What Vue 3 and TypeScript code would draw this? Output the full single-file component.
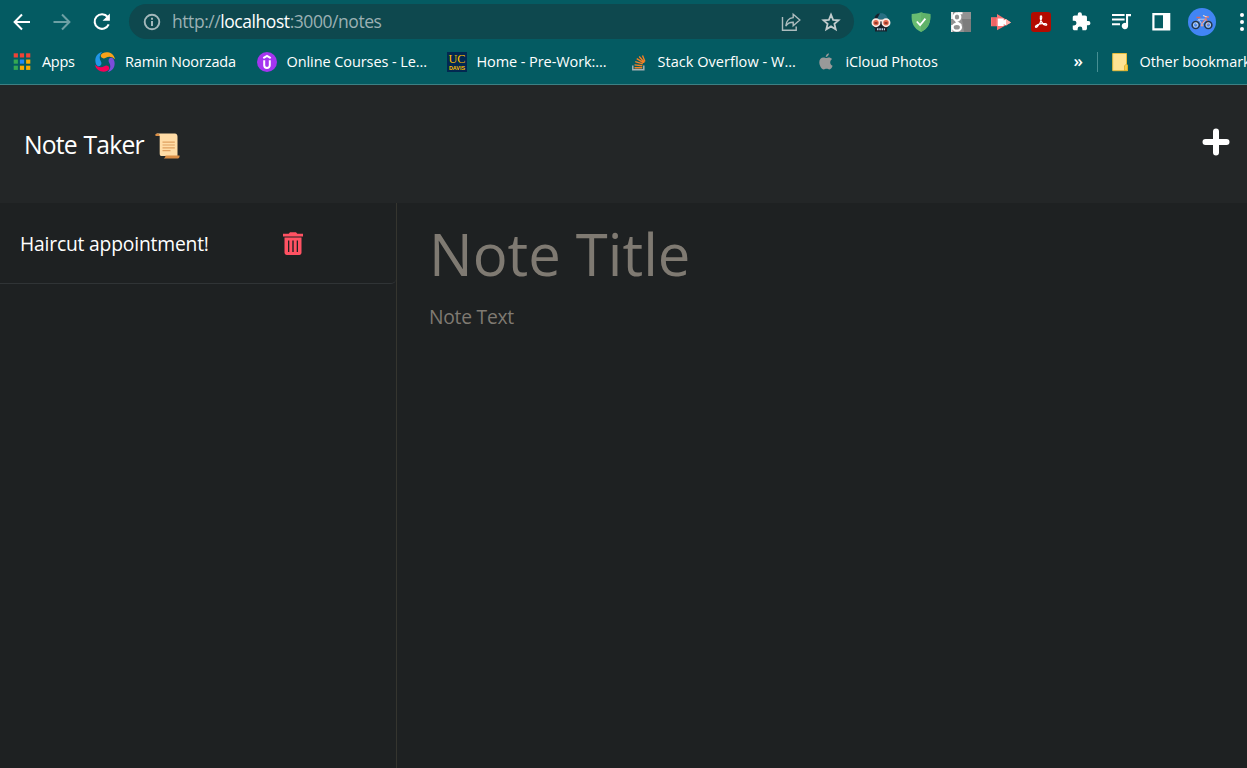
<script setup lang="ts">
interface Bookmark {
  icon: string
  label: string
  width: number
}

const bookmarks: Bookmark[] = [
  { icon: 'apps', label: 'Apps', width: 33 },
  { icon: 'swirl', label: 'Ramin Noorzada', width: 111.5 },
  { icon: 'udemy', label: 'Online Courses - Le...', width: 140 },
  { icon: 'davis', label: 'Home - Pre-Work:...', width: 131 },
  { icon: 'stack', label: 'Stack Overflow - W...', width: 138 },
  { icon: 'apple', label: 'iCloud Photos', width: 94 },
]

const appColors = ['#f04336', '#f04336', '#f04336', '#34a853', '#1e88f5', '#f9ab00', '#34a853', '#f9ab00', '#f9ab00']
const swirlColors = ['#f9a21a', '#7c4ddb', '#f50057', '#2196e8']
const notes: string[] = ['Haircut appointment!']
</script>

<template>
  <div class="window">
    <div class="toolbar">
      <span class="slot"><svg width="20" height="20" viewBox="0 0 20 20" fill="none" stroke="#fff" stroke-width="2"><path d="M18 10H3M10 2.500 2.600 10l7.400 7.500" /></svg></span>
      <span class="slot dim"><svg width="20" height="20" viewBox="0 0 20 20" fill="none" stroke="#fff" stroke-width="2"><path d="M1.500 10H17M10 2.500l7.400 7.500-7.400 7.500" /></svg></span>
      <span class="slot"><svg width="20" height="20" viewBox="0 0 20 20" fill="none" stroke="#fff" stroke-width="2.100"><path d="M15.700 5A7.300 7.300 0 1 0 16.700 12.400" /><path d="M17.900 1.400v7.300h-7.300z" fill="#fff" stroke="none" /></svg></span>
      <div class="address">
        <svg class="info" width="18" height="18" viewBox="0 0 18 18"><circle cx="9" cy="9" r="7.300" fill="none" stroke="#a4b8bb" stroke-width="1.900" /><path d="M8 8h2v5H8zM8 4.800h2v1.900H8z" fill="#a4b8bb" /></svg>
        <span class="url">http://<b>localhost</b>:3000/notes</span>
        <span class="slot push"><svg width="20" height="20" viewBox="0 0 20 20" fill="none" stroke="#aebcbe" stroke-width="1.400"><path d="M1.500 5v13.200h13.700v-3.700" /><path d="M12.200 2.200 18.800 8l-6.600 5.700v-3.400C8.800 10.200 6.600 11.200 4.800 14c.4-4.300 3-7.900 7.400-8.400z" /></svg></span>
        <span class="slot"><svg width="20" height="20" viewBox="0 0 20 20" fill="none" stroke="#c2cccd" stroke-width="1.800"><path d="m10 2.700 2.100 5.100 5.500.5-4.200 3.600 1.300 5.400-4.700-2.900-4.700 2.900 1.300-5.400-4.200-3.600 5.500-.5z" /></svg></span>
      </div>
      <span class="slot"><svg width="20" height="20" viewBox="0 0 20 20"><path d="M3 9C3 3.800 6 1.200 10 1.200S17 3.800 17 9z" fill="#276f82" /><path d="M3 9C3 4 5.500 1.300 9 1.200L5 9z" fill="#17222c" /><path d="M2 7.500h16v7l-2 2v3H4v-3l-2-2z" fill="#17222c" /><path d="M8 7.500h4v2H8z" fill="#f9ebe5" /><circle cx="5" cy="10.700" r="3.600" fill="#e2664c" stroke="#f9ebe5" stroke-width="1.700" /><circle cx="15" cy="10.700" r="3.600" fill="#e2664c" stroke="#f9ebe5" stroke-width="1.700" /><path d="M3.500 11h3M13.500 11h3" stroke="#7a2c22" stroke-width="1.500" /><path d="M6 17.300h8" stroke="#b6cce0" stroke-width="2" stroke-dasharray="1.500 .8" /></svg></span>
      <span class="slot"><svg width="20" height="20" viewBox="0 0 20 20"><path d="M10 .3c3 1.200 6 1.600 9.300 1.700C20 10.500 17.300 16.500 10 20 2.700 16.500 0 10.500.7 2 4 1.900 7 1.500 10 .3z" fill="#68bc71" /><path d="M10 .3c3 1.200 6 1.600 9.300 1.700C20 10.500 17.300 16.500 10 20z" fill="#60b269" /><path d="m5.800 9.500 3.300 3.600 5.300-6.500" fill="none" stroke="#fff" stroke-width="1.800" /></svg></span>
      <span class="slot"><svg width="20" height="20" viewBox="0 0 20 20"><path d="M0 0h20v20H0z" fill="#929292" /><path d="M11 7h9v13h-7z" fill="#7c7c7c" /><path d="M0 0h2v7H0zM0 13h1.500v7H0z" fill="#e8e8e8" /><ellipse cx="6" cy="5" rx="3.300" ry="3.700" fill="none" stroke="#fff" stroke-width="2.200" /><path d="M7 1.200h4.500M5.500 8.700c-1.500 2 3.500 2 4.400 4.700" fill="none" stroke="#fff" stroke-width="2" /><ellipse cx="5.800" cy="15.300" rx="4.200" ry="3.400" fill="none" stroke="#fff" stroke-width="2.200" /></svg></span>
      <span class="slot"><svg width="20" height="20" viewBox="0 0 20 20"><path d="M0 5.300h6V2l14 8.400L6 18.300v-4H0z" fill="#fa7574" /><path d="M2 5.500v8.500M4 5.500v8.500" stroke="#e45756" stroke-width="1" /><path d="M6.700 6.500h6v2l2.600-1.500v6.500l-2.600-1.500v2h-6z" fill="#fff" /><path d="m15 7 5 3.400-5 3z" fill="#ffb1aa" /></svg></span>
      <span class="slot"><svg width="20" height="20" viewBox="0 0 20 20"><rect width="20" height="20" rx="3.200" fill="#b30b00" /><path d="M9.400 4.200c1-.8 1.600.4 1.200 2.200-.5 2.800-2.500 6.500-4.400 8.300-1.200 1.100-2.300.4-1.400-.7 1.700-1.900 6.600-2.900 9.700-2.300 2 .4 1.300 1.800-.2 1.500C11.500 12.700 8.500 7.200 9.400 4.200z" fill="none" stroke="#fff" stroke-width="1.200" /></svg></span>
      <span class="slot"><svg width="22" height="22" viewBox="0 0 24 24"><path fill="#fff" d="M20 11h-1.500V7c0-1.100-.9-2-2-2H13V3.700a2.300 2.300 0 0 0-4.600 0V5H5c-1.100 0-2 .9-2 2v3.500h1.500a2.600 2.600 0 0 1 0 5.200H3V19c0 1.100.9 2 2 2h3.300v-1.500a2.600 2.600 0 0 1 5.200 0V21h3c1.100 0 2-.9 2-2v-3.400H20a2.300 2.300 0 0 0 0-4.600z" /></svg></span>
      <span class="slot"><svg width="20" height="20" viewBox="0 0 20 20"><path d="M1 3h12.600M1 7.500h12.600M1 12.200h8" stroke="#fff" stroke-width="2" /><path d="M15 2h5v2.300h-2.900v9.700a3.200 3.200 0 1 1-2.100-3z" fill="#fff" /></svg></span>
      <span class="slot"><svg width="20" height="20" viewBox="0 0 20 20"><path fill="#fff" fill-rule="evenodd" d="M1.300 1h18v17.400h-18zm2.200 2.200v13h8.500v-13z" /></svg></span>
      <span class="slot avatar"><svg width="28" height="28" viewBox="0 0 28 28"><circle cx="14" cy="14" r="14" fill="#4285f4" /><g fill="none"><path d="m8 16.500 2.800-5.300h7.200L14 16.500M10.800 11.200 14 16.500" stroke="#b9cdf0" stroke-width="1" /><path d="m20.300 17-3-8.500M13.500 15.500l4-4.500" stroke="#e8776a" stroke-width="1.100" /><circle cx="7.700" cy="17" r="3.600" stroke="#263747" stroke-width="1.500" /><circle cx="20.300" cy="17" r="3.600" stroke="#263747" stroke-width="1.500" /><circle cx="7.700" cy="17" r="2.200" stroke="#c9d6e0" stroke-width="1" /><circle cx="20.300" cy="17" r="2.200" stroke="#c9d6e0" stroke-width="1" /><path d="M8.500 9.500h4" stroke="#d8695d" stroke-width="1.500" /><path d="m15 7.500 2 .7 2.500.7" stroke="#f0d8d2" stroke-width="1.100" /><path d="m18.500 8.800 2.500.2" stroke="#e8776a" stroke-width="1.300" /><circle cx="14" cy="17.200" r="1.200" fill="#e0a099" /></g></svg></span>
      <span class="menu"><i></i><i></i><i></i></span>
    </div>

    <div class="bookmarks">
      <div v-for="b in bookmarks" :key="b.label" class="bookmark">
        <svg v-if="b.icon === 'apps'" width="20" height="20" viewBox="0 0 20 20"><rect v-for="(c, i) in appColors" :key="i" :x="1.7 + (i % 3) * 6.2" :y="1.3 + Math.floor(i / 3) * 6.2" width="4.200" height="4.200" :fill="c" /></svg>
        <svg v-else-if="b.icon === 'swirl'" width="20" height="20" viewBox="0 0 20 20"><path v-for="(c, i) in swirlColors" :key="c" d="M6 2.700C8-.8 18.500-1.200 20 7.200 17 4.400 13.500 4 10.800 5.800 8 7.500 4.800 5.400 6 2.700z" :fill="c" :transform="`rotate(${i * 90} 10 10)`" /></svg>
        <svg v-else-if="b.icon === 'udemy'" width="20" height="20" viewBox="0 0 20 20"><circle cx="10" cy="10" r="10" fill="#a435f0" /><path d="M6.300 6.200 10 4l3.700 2.200M7.200 8.300v4.900c0 3.600 5.600 3.600 5.600 0V8.300" fill="none" stroke="#fff" stroke-width="2" /></svg>
        <svg v-else-if="b.icon === 'davis'" width="20" height="20" viewBox="0 0 20 20"><path fill="#022851" d="M0 0h20v20H0z" /><text class="uc" x="1.500" y="11.300" textLength="17" lengthAdjust="spacingAndGlyphs">UC</text><text class="dv" x="2" y="17.600" textLength="16" lengthAdjust="spacingAndGlyphs">DAVIS</text></svg>
        <svg v-else-if="b.icon === 'stack'" width="20" height="20" viewBox="0 0 20 20" fill="none"><path d="M4.800 13.500v4.200h11v-4.200" stroke="#a5b0b3" stroke-width="1.500" /><path d="M6.500 15.700h7.800M6.500 12.900l7.800.9M7.200 9.700l7.600 2.200M8.700 6.700l6.700 4M11.200 4.500l5.200 6M14.500 3.500l2.400 6" stroke="#f48024" stroke-width="1.400" /></svg>
        <svg v-else class="fruit" width="20" height="20" viewBox="0 0 20 20" fill="#999"><path d="M14.200 10.600c0-1.800 1-2.900 2-3.500-1.300-1.700-3.400-1.900-4.600-1.400-1 .4-1.600.5-2.500.1-2.700-1.200-5.800.5-5.800 4.500 0 3 2.100 7.200 4.400 7.200 1.100 0 1.500-.7 2.900-.7 1.300 0 1.600.7 2.800.7 1.500 0 2.700-2.200 3.200-3.700-1.400-.6-2.400-1.600-2.400-3.200zM9.700 5c0-2 1.400-3.500 3.200-3.800C13 3.200 11.500 4.900 9.700 5z" /></svg>
        <span class="label" :class="b.icon" :style="{ width: b.width + 'px' }">{{ b.label }}</span>
      </div>
      <span class="more">»</span>
      <span class="divider"></span>
      <svg class="folder" width="16" height="20" viewBox="0 0 16 20"><path d="M.7 1.500h13.800v10.700l1 1v5.500H.7z" fill="#ffe393" stroke="#e6bd3d" stroke-width="1" /><path d="M12.500 18.500v-4.800l1.800-1.500 1.200 1v5.300z" fill="#f5cd50" stroke="#d8a91d" stroke-width=".7" /></svg>
      <span class="label other">Other bookmarks</span>
    </div>

    <header class="header">
      <h1>Note Taker</h1>
      <svg class="scroll" width="26" height="26" viewBox="0 0 26 26"><path d="M2.500.5h17.300c2 0 2.700 1.300 2.700 3.200V23H6.500c-1.300 0-1.800-.8-1.800-2.500V3H2.200C.3 3 0 .8 2.500.5z" fill="#ffdca6" /><path d="M2.500.5C-.3.700 0 3 1.500 3h3.200C4.700 1.500 4 .500 2.500.500zM10.500 22.400h14c.5 1.700-.8 3.100-2.300 3.100H7.500c1.800 0 3-1 3-3.100z" fill="#db8e45" /><path d="M7.500 9.100h12.300M7.500 12h12.300M7.500 14.900h12.300M7.500 17.600h8" stroke="#e0a060" stroke-width="1.200" /></svg>
      <svg class="plus" width="28" height="28" viewBox="0 0 28 28"><path d="M14 3.500v21M3.500 14h21" stroke="#fff" stroke-width="6" stroke-linecap="round" stroke-linejoin="round" /></svg>
    </header>

    <main class="main">
      <aside class="sidebar">
        <div v-for="n in notes" :key="n" class="note">
          <span class="name">{{ n }}</span>
          <svg class="trash" width="20" height="23" viewBox="0 0 20 23"><path fill="#ff5263" fill-rule="evenodd" d="M0 1.800h5.700L7 .2h6l1.300 1.600H20v2.700H0zM1.500 5.500h17v15.300c0 1.200-.9 2.100-2.100 2.100H3.600a2.100 2.100 0 0 1-2.100-2.100zM5 8.500V20h1.300V8.500zm4.300 0V20h1.400V8.500zm4.400 0V20H15V8.500z" /></svg>
        </div>
      </aside>
      <section class="editor">
        <div class="title">Note Title</div>
        <div class="text">Note Text</div>
      </section>
    </main>
  </div>
</template>

<style>
html,
body {
  background: #1e2122;
  overflow: hidden;
}
</style>

<style scoped>
.window {
  width: 1247px;
  height: 768px;
  display: flex;
  flex-direction: column;
  overflow: hidden;
  background: #1e2122;
  color: #fff;
  font-family: 'Open Sans', 'Noto Sans', sans-serif;
}
svg {
  display: block;
  flex: none;
}
.toolbar {
  height: 44px;
  flex: none;
  display: flex;
  align-items: center;
  padding-left: 2px;
  background: #045b62;
}
.slot {
  width: 40px;
  height: 42px;
  flex: none;
  display: flex;
  align-items: center;
  justify-content: center;
}
.slot.avatar {
  width: 42px;
}
.dim {
  opacity: 0.42;
}
.address {
  width: 725px;
  height: 35px;
  box-sizing: border-box;
  flex: none;
  margin: 0 7px 1px 7px;
  padding: 0 3px 0 14px;
  border-radius: 18px;
  display: flex;
  align-items: center;
  background: #0e484e;
}
.url {
  margin-left: 11px;
  font-size: 17.5px;
  line-height: 33px;
  letter-spacing: -0.44px;
  color: #9bb0b3;
  white-space: nowrap;
}
.url b {
  font-weight: 400;
  color: #fff;
}
.push {
  margin-left: auto;
}
.menu {
  width: 38px;
  height: 43px;
  flex: none;
  display: flex;
  flex-direction: column;
  align-items: center;
  justify-content: center;
  gap: 3px;
}
.menu i {
  width: 4px;
  height: 4px;
  border-radius: 50%;
  background: #fff;
}
.bookmarks {
  height: 40px;
  flex: none;
  display: flex;
  align-items: center;
  padding: 0 0 4px 12px;
  box-sizing: border-box;
  background: #045b62;
}
.bookmark {
  flex: none;
  display: flex;
  align-items: center;
  gap: 10px;
  margin-right: 20px;
}
.label {
  flex: none;
  font-size: 14.5px;
  line-height: 20px;
  letter-spacing: -0.08px;
  white-space: nowrap;
}
.label.apps {
  letter-spacing: -0.3px;
}
.label.swirl,
.label.apple {
  letter-spacing: -0.13px;
}
.label.stack {
  letter-spacing: 0.04px;
}
.uc {
  font: 11.5px 'Liberation Serif', serif;
  fill: #ffbf00;
}
.dv {
  font: bold 5.5px 'Liberation Sans', sans-serif;
  fill: #ffbf00;
}
.more {
  flex: none;
  margin-left: 114px;
  width: 13px;
  font-size: 17px;
  font-weight: 600;
  line-height: 18px;
  padding-bottom: 3px;
}
.divider {
  flex: none;
  width: 1px;
  height: 20px;
  margin: 0 14px 0 10px;
  background: #478f93;
}
.other {
  margin-left: 12px;
}
.header {
  height: 119px;
  flex: none;
  box-sizing: border-box;
  display: flex;
  align-items: center;
  border-top: 1px solid #3c8084;
  padding: 1px 17px 0 24px;
  background: #232627;
}
h1 {
  width: 131px;
  margin: 1px 0 0;
  font-size: 24.7px;
  font-weight: 400;
  line-height: 36px;
  letter-spacing: -0.8px;
  word-spacing: 1px;
  white-space: nowrap;
}
.scroll {
  margin-top: 2px;
}
.plus {
  margin: 0 0 6px auto;
}
.main {
  flex: 1;
  display: flex;
}
.sidebar {
  width: 396px;
  border-right: 1px solid #35352f;
}
.note {
  height: 81px;
  box-sizing: border-box;
  display: flex;
  align-items: center;
  padding-left: 20px;
  border-bottom: 1px solid #303436;
  border-bottom-right-radius: 5px;
}
.name {
  width: 263px;
  font-size: 19.3px;
  letter-spacing: -0.19px;
  white-space: nowrap;
}
.editor {
  padding: 11px 0 0 32px;
  color: #7f7a72;
}
.title {
  font-size: 58px;
  line-height: 80px;
  letter-spacing: 0;
  white-space: nowrap;
}
.text {
  margin-top: 9px;
  font-size: 19.3px;
  line-height: 28px;
  letter-spacing: -0.25px;
}
</style>
